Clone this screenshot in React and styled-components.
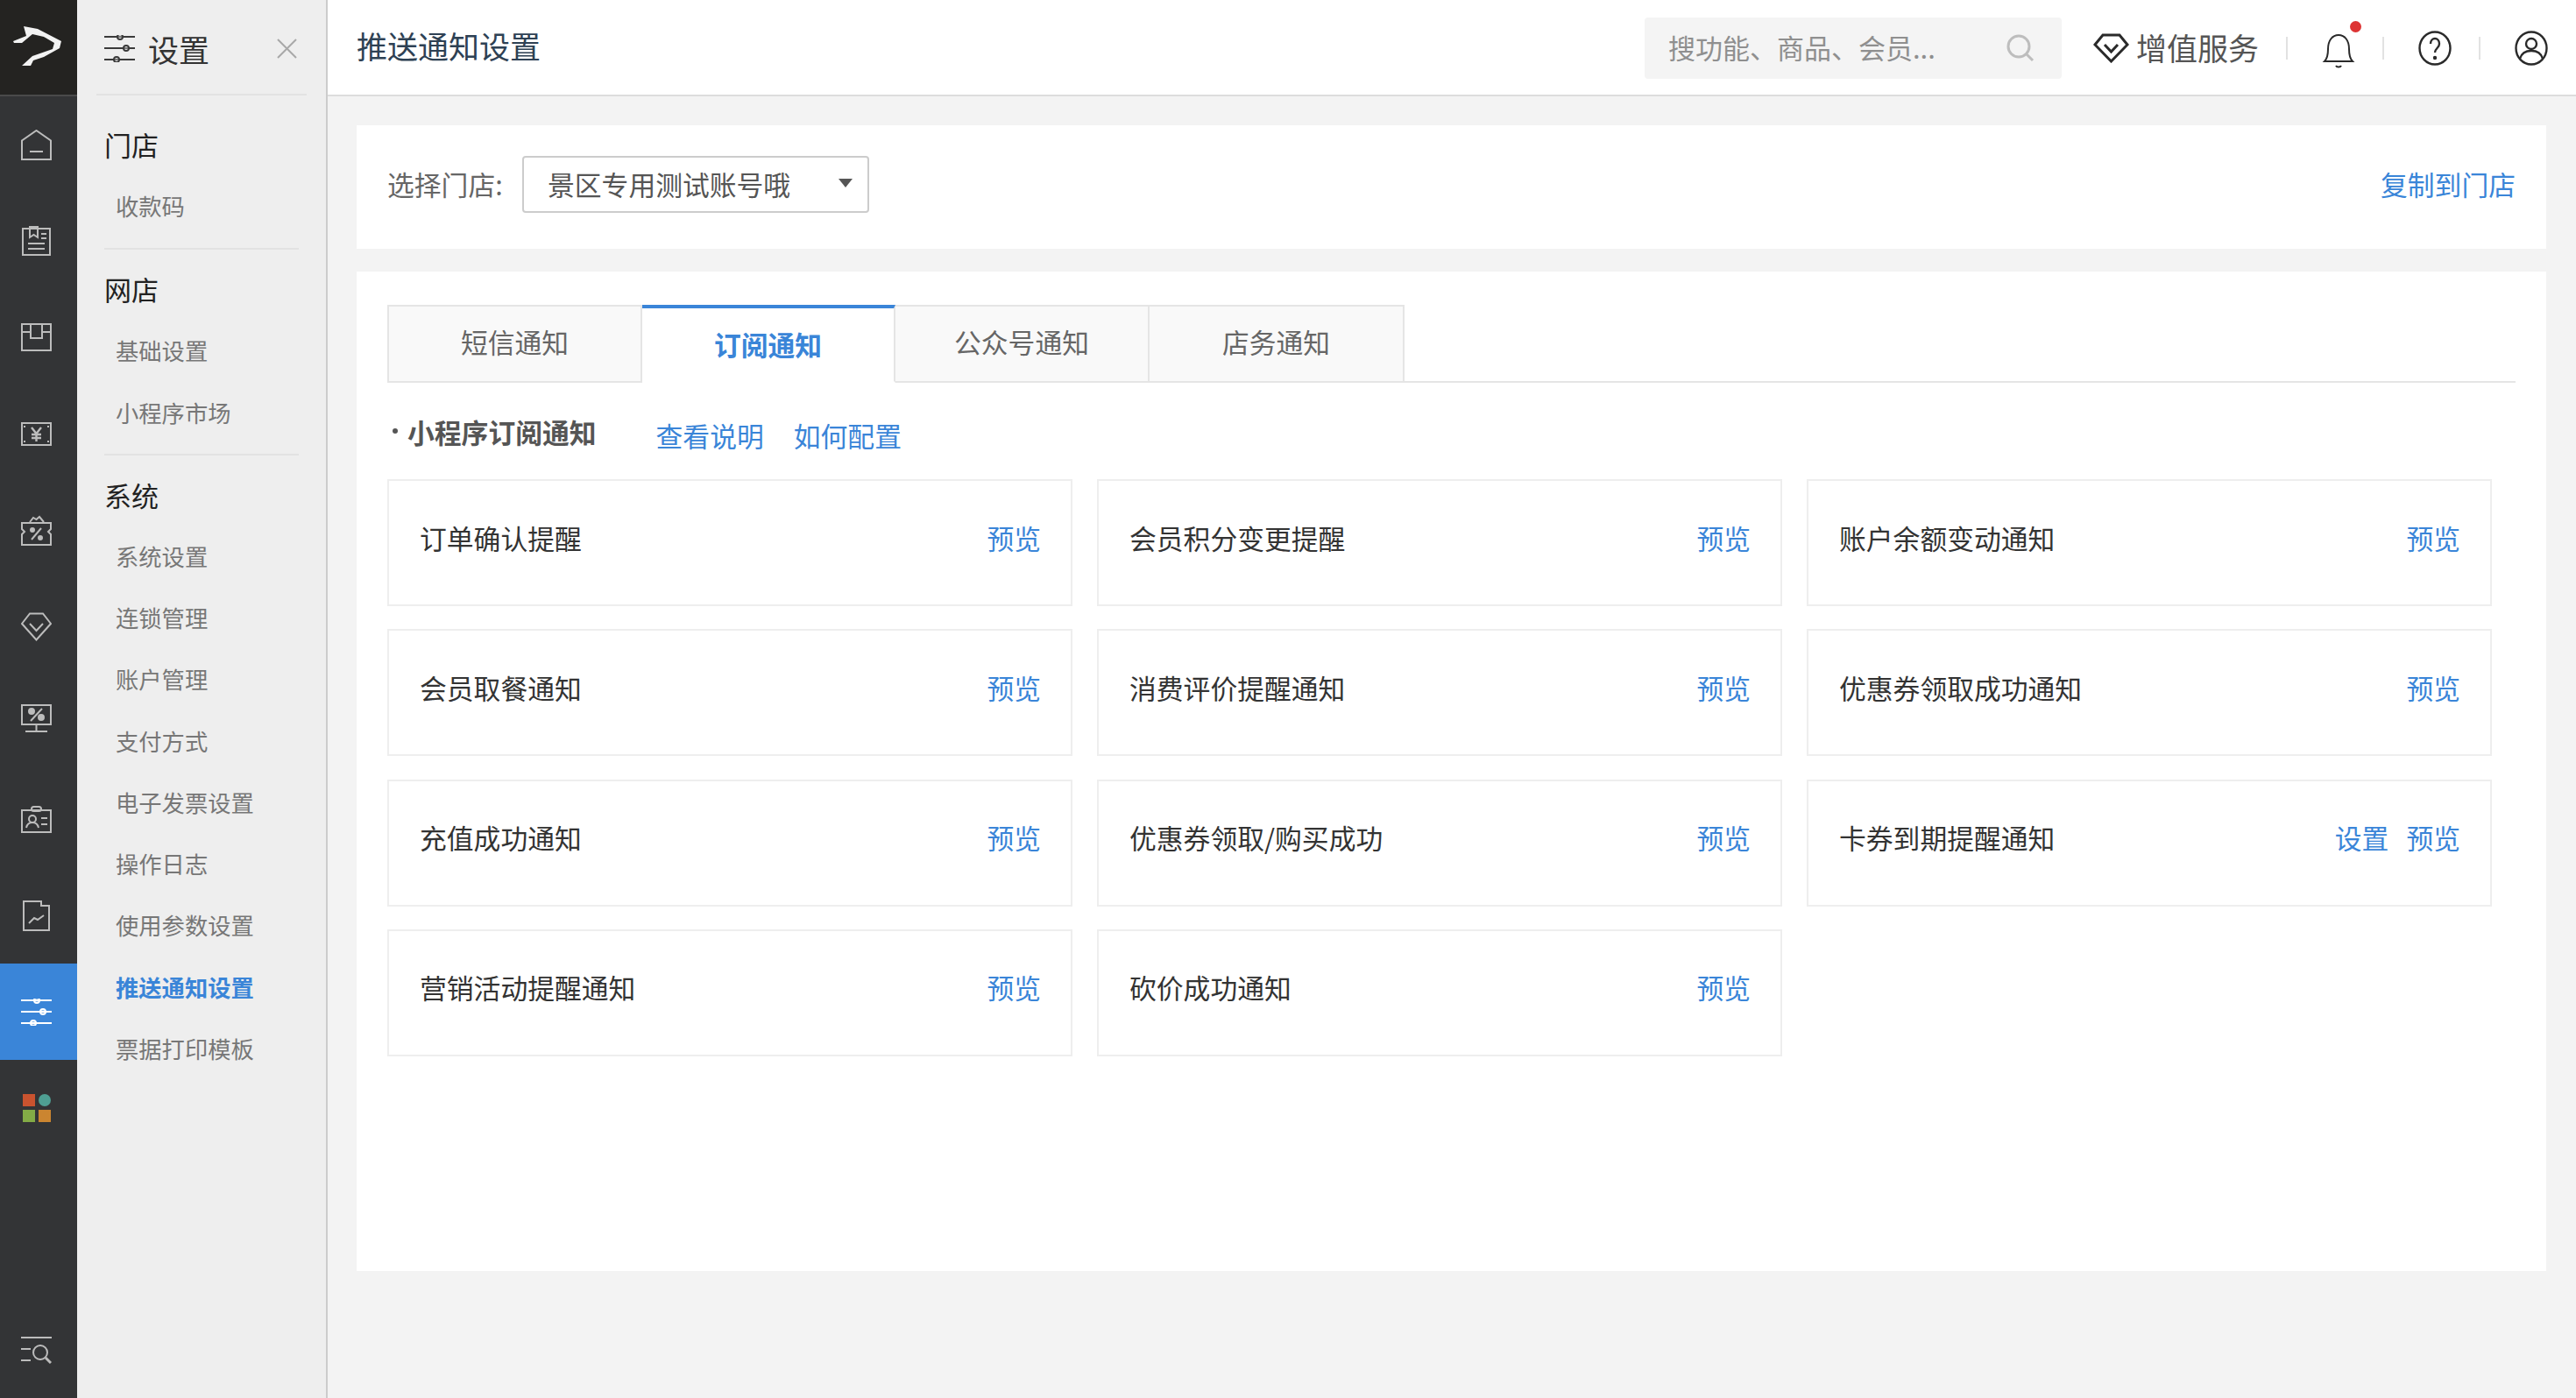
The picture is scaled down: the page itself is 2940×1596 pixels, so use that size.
import React from "react";
import styled, { createGlobalStyle } from "styled-components";

const GlobalStyle = createGlobalStyle`
  html, body {
    margin: 0;
    padding: 0;
    height: 100%;
    background: #f3f3f3;
    overflow: hidden;
  }
  * {
    box-sizing: border-box;
  }
  body {
    font-family: "Noto Sans CJK SC", "Noto Sans", sans-serif;
    font-size: 30.8px;
  }
`;

const Layout = styled.div`
  display: flex;
  width: 100%;
  height: 100vh;
`;

const Rail = styled.nav`
  display: flex;
  flex-direction: column;
  flex: 0 0 88px;
  background: #333436;
`;

const RailLogo = styled.div`
  display: flex;
  align-items: center;
  justify-content: center;
  height: 110px;
  padding: 0 2px 2px 0;
  background: #242321;
  border-bottom: 2px solid #4a4a4a;
`;

const RailItem = styled.div`
  display: flex;
  align-items: center;
  justify-content: center;
  height: 110px;
  padding-right: 5px;
  color: ${(p) => (p.$active ? "#fff" : "#bcbcbc")};
  background: ${(p) => (p.$active ? "#3a85d8" : "transparent")};
  margin-top: ${(p) => (p.$bottom ? "auto" : "0")};
`;

const Panel = styled.aside`
  flex: 0 0 286px;
  background: #eeeeee;
  border-right: 2px solid #cccccc;
`;

const PanelHead = styled.div`
  display: flex;
  align-items: center;
  height: 109px;
  margin: 0 22px;
  padding: 4px 11px 0 9px;
  border-bottom: 2px solid #e2e2e2;
  color: #3a3a3a;
`;

const PanelTitle = styled.span`
  margin-left: 15px;
  font-size: 35px;
  line-height: 44px;
  color: #333;
`;

const CloseBtn = styled.span`
  display: flex;
  margin-left: auto;
  color: #a8a8a8;
`;

const Group = styled.section`
  margin: 0 31px;
  padding: ${(p) => (p.$first ? "21px 0 13px" : "10px 0 12px")};
  border-bottom: ${(p) => (p.$last ? "none" : "2px solid #e2e2e2")};
`;

const GroupTitle = styled.div`
  height: 70px;
  line-height: 70px;
  font-size: 31px;
  color: #222;
`;

const GroupItem = styled.div`
  height: 70.25px;
  line-height: 70px;
  padding-left: 13px;
  font-size: 26.3px;
  white-space: nowrap;
  color: ${(p) => (p.$active ? "#3a85d8" : "#777")};
  font-weight: ${(p) => (p.$active ? 700 : 400)};
`;

const Main = styled.main`
  display: flex;
  flex-direction: column;
  flex: 1;
  min-width: 0;
`;

const Header = styled.header`
  display: flex;
  align-items: center;
  flex: 0 0 110px;
  padding: 2px 32px 0 33px;
  background: #fff;
  border-bottom: 2px solid #dddddd;
`;

const PageTitle = styled.h1`
  margin: 0 auto 8px 0;
  font-size: 35px;
  font-weight: 400;
  color: #2e4154;
`;

const SearchBox = styled.div`
  display: flex;
  align-items: center;
  justify-content: space-between;
  width: 476px;
  height: 70px;
  padding: 0 31px 0 27px;
  background: #f4f4f4;
  border-radius: 4px;
  color: #8f8f8f;
  font-size: 31px;
`;

const SearchText = styled.span`
  margin-bottom: 3px;
`;

const SearchIcon = styled.span`
  display: flex;
  color: #bdbdbd;
`;

const Service = styled.div`
  display: flex;
  align-items: center;
  gap: 8px;
  margin: 0 0 4px 36px;
  font-size: 35px;
  color: #555;
`;

const HeaderIcon = styled.span`
  position: relative;
  display: flex;
  color: #2a2a2a;
  margin-top: ${(p) => (p.$drop ? "4px" : "0")};
`;

const RedDot = styled.i`
  position: absolute;
  top: -8px;
  right: -7px;
  width: 13px;
  height: 13px;
  border-radius: 50%;
  background: #dd3333;
`;

const Sep = styled.span`
  width: 2px;
  height: 26px;
  margin: 0 39px 0 31px;
  background: #e2e2e2;
`;

const Content = styled.div`
  display: flex;
  flex-direction: column;
  gap: 26px;
  padding: 33px 34px 0 33px;
`;

const StoreCard = styled.div`
  display: flex;
  align-items: center;
  padding: 35px 35px 41px;
  background: #fff;
`;

const FieldLabel = styled.span`
  width: 154px;
  margin-bottom: 3px;
  color: #666;
`;

const Select = styled.div`
  display: flex;
  align-items: center;
  justify-content: space-between;
  width: 396px;
  height: 65px;
  padding: 0 17px 3px 27px;
  border: 2px solid #cccccc;
  border-radius: 4px;
  color: #555;
`;

const Caret = styled.i`
  width: 0;
  height: 0;
  border-left: 8.5px solid transparent;
  border-right: 8.5px solid transparent;
  border-top: 10px solid #555;
`;

const TextLink = styled.a`
  color: #3a85d8;
  white-space: nowrap;
  margin-left: ${(p) => (p.$push ? "auto" : "0")};
  margin-bottom: ${(p) => (p.$push ? "3px" : "0")};
`;

const NoticeCard = styled.div`
  height: 1141px;
  padding: 38px 35px 0;
  background: #fff;
`;

const Tabs = styled.div`
  display: flex;
  border-bottom: 2px solid #e5e5e5;
`;

const Tab = styled.div`
  display: flex;
  align-items: center;
  justify-content: center;
  width: ${(p) => p.$w}px;
  height: 89px;
  margin-bottom: -2px;
  padding-bottom: ${(p) => (p.$active ? "3px" : "6px")};
  background: ${(p) => (p.$active ? "#fff" : "#f9f9f9")};
  color: ${(p) => (p.$active ? "#3a85d8" : "#666")};
  font-weight: ${(p) => (p.$active ? 700 : 400)};
  border: 2px solid #e5e5e5;
  border-left-width: ${(p) => (p.$first ? "2px" : "0")};
  border-top: ${(p) => (p.$active ? "4px solid #3a85d8" : "2px solid #e5e5e5")};
  border-bottom: ${(p) => (p.$active ? "2px solid #fff" : "2px solid #e5e5e5")};
`;

const SectionRow = styled.div`
  display: flex;
  align-items: center;
  height: 110px;
`;

const SectionTitle = styled.h2`
  display: flex;
  align-items: center;
  margin: 0 68px 0 0;
  font-size: 30.8px;
  font-weight: 700;
  color: #555;

  &::before {
    content: "";
    width: 6px;
    height: 6px;
    margin: 0 11px 0 6px;
    border-radius: 50%;
    background: #555;
  }
`;

const SectionLinks = styled.div`
  display: flex;
  gap: 34px;
  margin-top: 9px;
`;

const NoticeGrid = styled.div`
  display: grid;
  grid-template-columns: repeat(3, 782px);
  grid-auto-rows: 145px;
  column-gap: 28px;
  row-gap: 26.33px;
`;

const NoticeItem = styled.div`
  display: flex;
  align-items: center;
  padding: 0 34px 13px 35px;
  border: 2px solid #eeeeee;
  color: #333;
`;

const NoticeActions = styled.div`
  display: flex;
  gap: 20px;
  margin-left: auto;
`;

function Ico({ w = 35, h = 35, sw = 2, children }) {
  return (
    <svg
      width={w}
      height={h}
      viewBox={`0 0 ${w} ${h}`}
      fill="none"
      stroke="currentColor"
      strokeWidth={sw}
    >
      {children}
    </svg>
  );
}

const Sliders = ({ sw = 2 }) => (
  <Ico h={31} sw={sw}>
    <path d="M0 2h35M0 15h35M0 28h35" />
    <circle cx="18" cy="2" r="3" fill="#fff" fillOpacity=".35" />
    <circle cx="25" cy="15" r="3" fill="#fff" fillOpacity=".35" />
    <circle cx="14" cy="28" r="3" fill="#fff" fillOpacity=".35" />
  </Ico>
);

const railIcons = [
  <Ico key="home">
    <path d="M1 34V12.5L17.5 1 34 12.5V34z" />
    <path d="M10 25h15" />
  </Ico>,
  <Ico key="order" h={37}>
    <path d="M2 4h31v30H2z" />
    <path d="M10 2v12l4.5-3 4.5 3V2z" />
    <path d="M23 10h6M23 15h6M8 21h19M8 27h19" />
  </Ico>,
  <Ico key="box" h={32}>
    <path d="M1 1h33v30H1z" />
    <path d="M1 10h10V17h13V10h10M11 1v9M24 1v9" />
  </Ico>,
  <Ico key="cash" h={27}>
    <path d="M1 1h33v25H1z" />
    <path d="M4 4v2M31 4v2M4 21v2M31 21v2" />
    <path d="M12 6l5.5 7L23 6M17.5 13v9M12 14h11M12 18h11" strokeWidth="2.4" />
  </Ico>,
  <Ico key="coupon">
    <path d="M1 9h33v7l-3 3 3 3v12H1V22l3-3-3-3z" />
    <path d="M10 8l4-5 3.5 2L21 2l5 6" />
    <path d="M23 15L12 28" />
    <circle cx="13" cy="17" r="2" fill="currentColor" />
    <circle cx="22" cy="26" r="2" fill="currentColor" />
  </Ico>,
  <Ico key="diamond" h={33}>
    <path d="M10 1.5h15L34 13 17.5 31.5 1 13z" />
    <path d="M10 13l7.5 8L25 13" />
  </Ico>,
  <Ico key="promo" h={43}>
    <path d="M1 1h33v22H1zM17.5 23v8M5 31h25" />
    <path d="M24 5L11 19" />
    <circle cx="12" cy="8" r="3" fill="currentColor" />
    <circle cx="23" cy="15" r="3" fill="currentColor" />
  </Ico>,
  <Ico key="member" h={31}>
    <path d="M1 5h33v25H1z" />
    <rect x="12" y="1" width="11" height="5" rx="2.5" />
    <circle cx="13" cy="15" r="4" />
    <path d="M6 25c1-5 4-6 7-6s6 1 7 6M23 14h7M23 21h7" />
  </Ico>,
  <Ico key="report" h={35}>
    <path d="M3 34V1h20v5h9v28z" />
    <path d="M9 26l6-6 4 2 7-5" />
  </Ico>,
  <Sliders key="settings" />,
];

const AppsIcon = () => (
  <svg width="32" height="32" viewBox="0 0 32 32">
    <rect x="0" y="0" width="14" height="14" fill="#c9532f" />
    <circle cx="25" cy="7" r="7" fill="#4f9f93" />
    <rect x="0" y="18" width="14" height="14" fill="#83ab46" />
    <rect x="18" y="18" width="14" height="14" fill="#cb8530" />
  </svg>
);

const Logo = () => (
  <svg width="56" height="46" viewBox="0 0 56 46">
    <path
      fill="#f2f2f2"
      d="M0 17 L15 11 L12 0 L28 3 L55 17 L53 25 L35 35 L23 39 L20 45 L10 45 L22 34 L45 26 L47 19 L35 12 L22 9 L10 19 L1 19z"
    />
    <path fill="#242321" d="M31 12l7 2 1 4-5-2z" />
  </svg>
);

const groups = [
  { title: "门店", items: ["收款码"] },
  { title: "网店", items: ["基础设置", "小程序市场"] },
  {
    title: "系统",
    items: [
      "系统设置",
      "连锁管理",
      "账户管理",
      "支付方式",
      "电子发票设置",
      "操作日志",
      "使用参数设置",
      "推送通知设置",
      "票据打印模板",
    ],
  },
];

const tabs = [
  { label: "短信通知", w: 291 },
  { label: "订阅通知", w: 289, active: true },
  { label: "公众号通知", w: 290 },
  { label: "店务通知", w: 291 },
];

const notices = [
  { name: "订单确认提醒" },
  { name: "会员积分变更提醒" },
  { name: "账户余额变动通知" },
  { name: "会员取餐通知" },
  { name: "消费评价提醒通知" },
  { name: "优惠券领取成功通知" },
  { name: "充值成功通知" },
  { name: "优惠券领取/购买成功" },
  { name: "卡券到期提醒通知", setting: true },
  { name: "营销活动提醒通知" },
  { name: "砍价成功通知" },
];

export default function App() {
  return (
    <Layout>
      <GlobalStyle />
      <Rail>
        <RailLogo>
          <Logo />
        </RailLogo>
        {railIcons.map((icon, i) => (
          <RailItem key={i} $active={i === 9}>
            {icon}
          </RailItem>
        ))}
        <RailItem>
          <AppsIcon />
        </RailItem>
        <RailItem $bottom>
          <Ico h={33}>
            <path d="M0 2h35M0 15h11M0 28h11" />
            <circle cx="22" cy="19" r="8" />
            <path d="M28 25l6 6" strokeWidth="3" />
          </Ico>
        </RailItem>
      </Rail>

      <Panel>
        <PanelHead>
          <Sliders />
          <PanelTitle>设置</PanelTitle>
          <CloseBtn>
            <Ico w={23} h={23}>
              <path d="M1 1l21 21M22 1L1 22" />
            </Ico>
          </CloseBtn>
        </PanelHead>
        {groups.map((g, i) => (
          <Group key={g.title} $first={i === 0} $last={i === groups.length - 1}>
            <GroupTitle>{g.title}</GroupTitle>
            {g.items.map((item) => (
              <GroupItem key={item} $active={item === "推送通知设置"}>
                {item}
              </GroupItem>
            ))}
          </Group>
        ))}
      </Panel>

      <Main>
        <Header>
          <PageTitle>推送通知设置</PageTitle>
          <SearchBox>
            <SearchText>搜功能、商品、会员...</SearchText>
            <SearchIcon>
              <Ico w={32} h={32} sw={3}>
                <circle cx="14" cy="14" r="12" />
                <path d="M23 23l7 7" />
              </Ico>
            </SearchIcon>
          </SearchBox>
          <Service>
            <HeaderIcon $drop>
              <Ico w={41} h={34} sw={3}>
                <path d="M11 2h19l9 11-18.5 19L2 13z" />
                <path d="M13 13l7.5 8L28 13" />
              </Ico>
            </HeaderIcon>
            增值服务
          </Service>
          <Sep />
          <HeaderIcon>
            <Ico w={38} h={46} sw={2}>
              <g transform="translate(0 6)">
                <path d="M3 32c3-3 4-6 4-14C7 8 12 2 19 2s12 6 12 16c0 8 1 11 4 14z" />
                <path d="M16 37c1 2 5 2 6 0" />
              </g>
            </Ico>
            <RedDot />
          </HeaderIcon>
          <Sep />
          <HeaderIcon>
            <Ico w={38} h={40} sw={2.4}>
              <ellipse cx="19" cy="20" rx="17.5" ry="18.5" />
              <path d="M14 15c0-4 2.5-6 5-6s5 2 5 6c0 5-5 5-5 10" />
              <circle cx="19" cy="31" r="1" fill="currentColor" />
            </Ico>
          </HeaderIcon>
          <Sep />
          <HeaderIcon>
            <Ico w={38} h={40} sw={2.4}>
              <ellipse cx="19" cy="20" rx="17.5" ry="18.5" />
              <circle cx="19" cy="15" r="6" />
              <path d="M6 32c2-7 7-9 13-9s11 2 13 9" />
            </Ico>
          </HeaderIcon>
        </Header>

        <Content>
          <StoreCard>
            <FieldLabel>选择门店:</FieldLabel>
            <Select>
              景区专用测试账号哦
              <Caret />
            </Select>
            <TextLink $push>复制到门店</TextLink>
          </StoreCard>

          <NoticeCard>
            <Tabs>
              {tabs.map((t, i) => (
                <Tab key={t.label} $w={t.w} $active={t.active} $first={i === 0}>
                  {t.label}
                </Tab>
              ))}
            </Tabs>
            <SectionRow>
              <SectionTitle>小程序订阅通知</SectionTitle>
              <SectionLinks>
                <TextLink>查看说明</TextLink>
                <TextLink>如何配置</TextLink>
              </SectionLinks>
            </SectionRow>
            <NoticeGrid>
              {notices.map((n) => (
                <NoticeItem key={n.name}>
                  {n.name}
                  <NoticeActions>
                    {n.setting && <TextLink>设置</TextLink>}
                    <TextLink>预览</TextLink>
                  </NoticeActions>
                </NoticeItem>
              ))}
            </NoticeGrid>
          </NoticeCard>
        </Content>
      </Main>
    </Layout>
  );
}
